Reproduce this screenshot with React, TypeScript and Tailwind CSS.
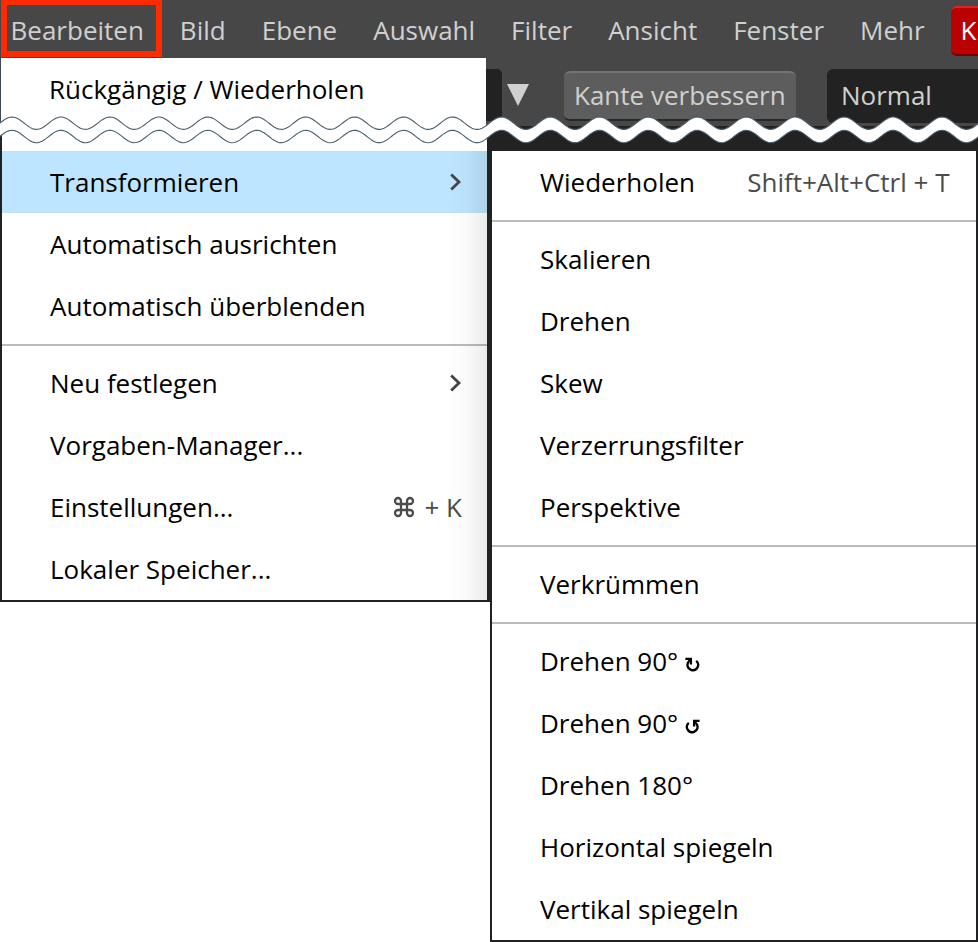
import React from "react";
import { Command } from "lucide-react";

type MenuEntry = {
  label?: string;
  shortcut?: React.ReactNode;
  submenu?: boolean;
  active?: boolean;
  rotate?: "cw" | "ccw";
  separator?: boolean;
};

const topItems = ["Bearbeiten", "Bild", "Ebene", "Auswahl", "Filter", "Ansicht", "Fenster", "Mehr"];

const editMenu: MenuEntry[] = [
  { label: "Transformieren", submenu: true, active: true },
  { label: "Automatisch ausrichten" },
  { label: "Automatisch überblenden" },
  { separator: true },
  { label: "Neu festlegen", submenu: true },
  { label: "Vorgaben-Manager..." },
  {
    label: "Einstellungen...",
    shortcut: (
      <span className="flex items-center">
        <Command className="mr-[8px] h-[24px] w-[24px]" strokeWidth={2.3} />+ K
      </span>
    ),
  },
  { label: "Lokaler Speicher..." },
];

const transformMenu: MenuEntry[] = [
  { label: "Wiederholen", shortcut: "Shift+Alt+Ctrl + T" },
  { separator: true },
  { label: "Skalieren" },
  { label: "Drehen" },
  { label: "Skew" },
  { label: "Verzerrungsfilter" },
  { label: "Perspektive" },
  { separator: true },
  { label: "Verkrümmen" },
  { separator: true },
  { label: "Drehen 90°", rotate: "cw" },
  { label: "Drehen 90°", rotate: "ccw" },
  { label: "Drehen 180°" },
  { label: "Horizontal spiegeln" },
  { label: "Vertikal spiegeln" },
];

// Points of the torn edge, sampled from a cosine
const wavePoints = (center: number) => {
  const points: string[] = [];
  for (let x = 0; x <= 978; x += 2) {
    const y = center - 6.2 * Math.cos(((x - 12) / 48.95) * 2 * Math.PI);
    points.push(`${x},${y.toFixed(2)}`);
  }
  return points;
};

const TornEdge = () => {
  const upper = wavePoints(9.2);
  const lower = wavePoints(22.5);
  return (
    <svg className="absolute left-0 top-[114px]" width="978" height="32" viewBox="0 0 978 32">
      <polygon points={[...upper, ...[...lower].reverse()].join(" ")} fill="#fff" />
      <polyline points={upper.join(" ")} fill="none" stroke="#4b5f6c" strokeWidth="1.1" />
      <polyline points={lower.join(" ")} fill="none" stroke="#4b5f6c" strokeWidth="1.1" />
    </svg>
  );
};

const RotateIcon = ({ ccw }: { ccw?: boolean }) => (
  <svg
    className={ccw ? "ml-[7px] mt-[6px] -scale-x-100" : "ml-[7px] mt-[6px]"}
    width="15"
    height="15"
    viewBox="0 0 15 15"
    fill="none"
    stroke="currentColor"
    strokeWidth="2.3"
  >
    <path d="M11.2 3.8A5.3 5.3 0 1 1 2.6 6.8Q3 5.2 5 3" />
    <path d="M0.4 1.9H5.9V7.4" />
  </svg>
);

const MenuRow = ({ entry }: { entry: MenuEntry }) => {
  if (entry.separator) {
    return (
      <div className="h-[15px] pt-[7px]">
        <div className="h-[2px] bg-[#bbb]" />
      </div>
    );
  }
  return (
    <div
      className={`flex h-[62px] items-center justify-between pl-12 pr-[25px] ${entry.active ? "bg-[#bde5ff]" : ""}`}
    >
      <span className="flex items-center">
        {entry.label}
        {entry.rotate && <RotateIcon ccw={entry.rotate === "ccw"} />}
      </span>
      {entry.shortcut && (
        <span className={`text-[#4c4c4c] ${typeof entry.shortcut === "string" ? "mr-[1.5px]" : ""}`}>
          {entry.shortcut}
        </span>
      )}
      {entry.submenu && (
        <svg width="12" height="18" viewBox="0 0 12 18" fill="none" stroke="#454545" strokeWidth="2.8">
          <path d="M1.2 1.5L9 9L1.2 16.5" />
        </svg>
      )}
    </div>
  );
};

export default function App() {
  return (
    <div className="relative h-[942px] w-[978px] overflow-hidden whitespace-nowrap bg-white font-['Open_Sans',sans-serif] text-[26px] leading-[36px] text-black">
      <header className="h-[151px] bg-[#222]">
        <div className="h-[126px] bg-[#474747]">
          <nav className="flex h-[58px] items-center pl-[10.5px] text-[#d0d0d0]">
            {topItems.map((item) => (
              <span key={item} className="mr-[36px] mt-[2px]">
                {item}
              </span>
            ))}
            <span className="-ml-[10px] mt-[4px] h-[50px] w-[80px] shrink-0 rounded-[6px] border-b-2 border-t-2 border-b-[#700] border-t-[#d22c22] bg-[#bb0000] pl-[10px] pt-[4px] text-white">
              K
            </span>
          </nav>
          <div className="flex h-[68px] items-start text-[#d0d0d0]">
            <div className="h-[68px] w-[486px] shrink-0 border-l border-[#3b4b58] bg-white pl-[48px] pt-[13px] text-black">
              Rückgängig / Wiederholen
            </div>
            <div className="mt-[11px] h-[52px] w-[16px] shrink-0 rounded-tr-[5px] bg-[#222]" />
            <svg className="ml-[5px] mt-[26px] shrink-0" width="22" height="22" viewBox="0 0 22 22">
              <path d="M0 0H22L11 22Z" fill="#d0d0d0" />
            </svg>
            <div className="ml-[35px] mt-[13px] h-[50px] w-[232px] shrink-0 rounded-[6px] border-b-2 border-t-2 border-b-[#282828] border-t-[#747474] bg-[#5d5d5d] pl-[10px] pt-[4px]">
              Kante verbessern
            </div>
            <div className="ml-[31px] mt-[11px] h-[54px] w-[170px] shrink-0 rounded-[6px] bg-[#222] pl-[14px] pt-[8px]">
              Normal
            </div>
          </div>
        </div>
        <div className="h-[25px] w-[487px] border-l-2 border-[#1d262d] bg-white" />
      </header>

      <main className="flex items-start">
        <div className="relative w-[490px] border-b-2 border-l-2 border-r-[3px] border-[#1f2123]">
          {editMenu.map((entry, i) => (
            <MenuRow key={i} entry={entry} />
          ))}
          {/* shadow cast by the open submenu */}
          <div className="absolute bottom-0 right-0 top-0 w-[42px] bg-linear-to-r from-black/0 via-black/2 to-black/8" />
        </div>
        <div className="w-[488px] border-x-2 border-b-2 border-[#1f2123]">
          {transformMenu.map((entry, i) => (
            <MenuRow key={i} entry={entry} />
          ))}
        </div>
      </main>

      <TornEdge />
      <div className="absolute left-px top-0 h-[57px] w-[161px] border-[6px] border-t-[5px] border-[#ff2a00]" />
    </div>
  );
}
